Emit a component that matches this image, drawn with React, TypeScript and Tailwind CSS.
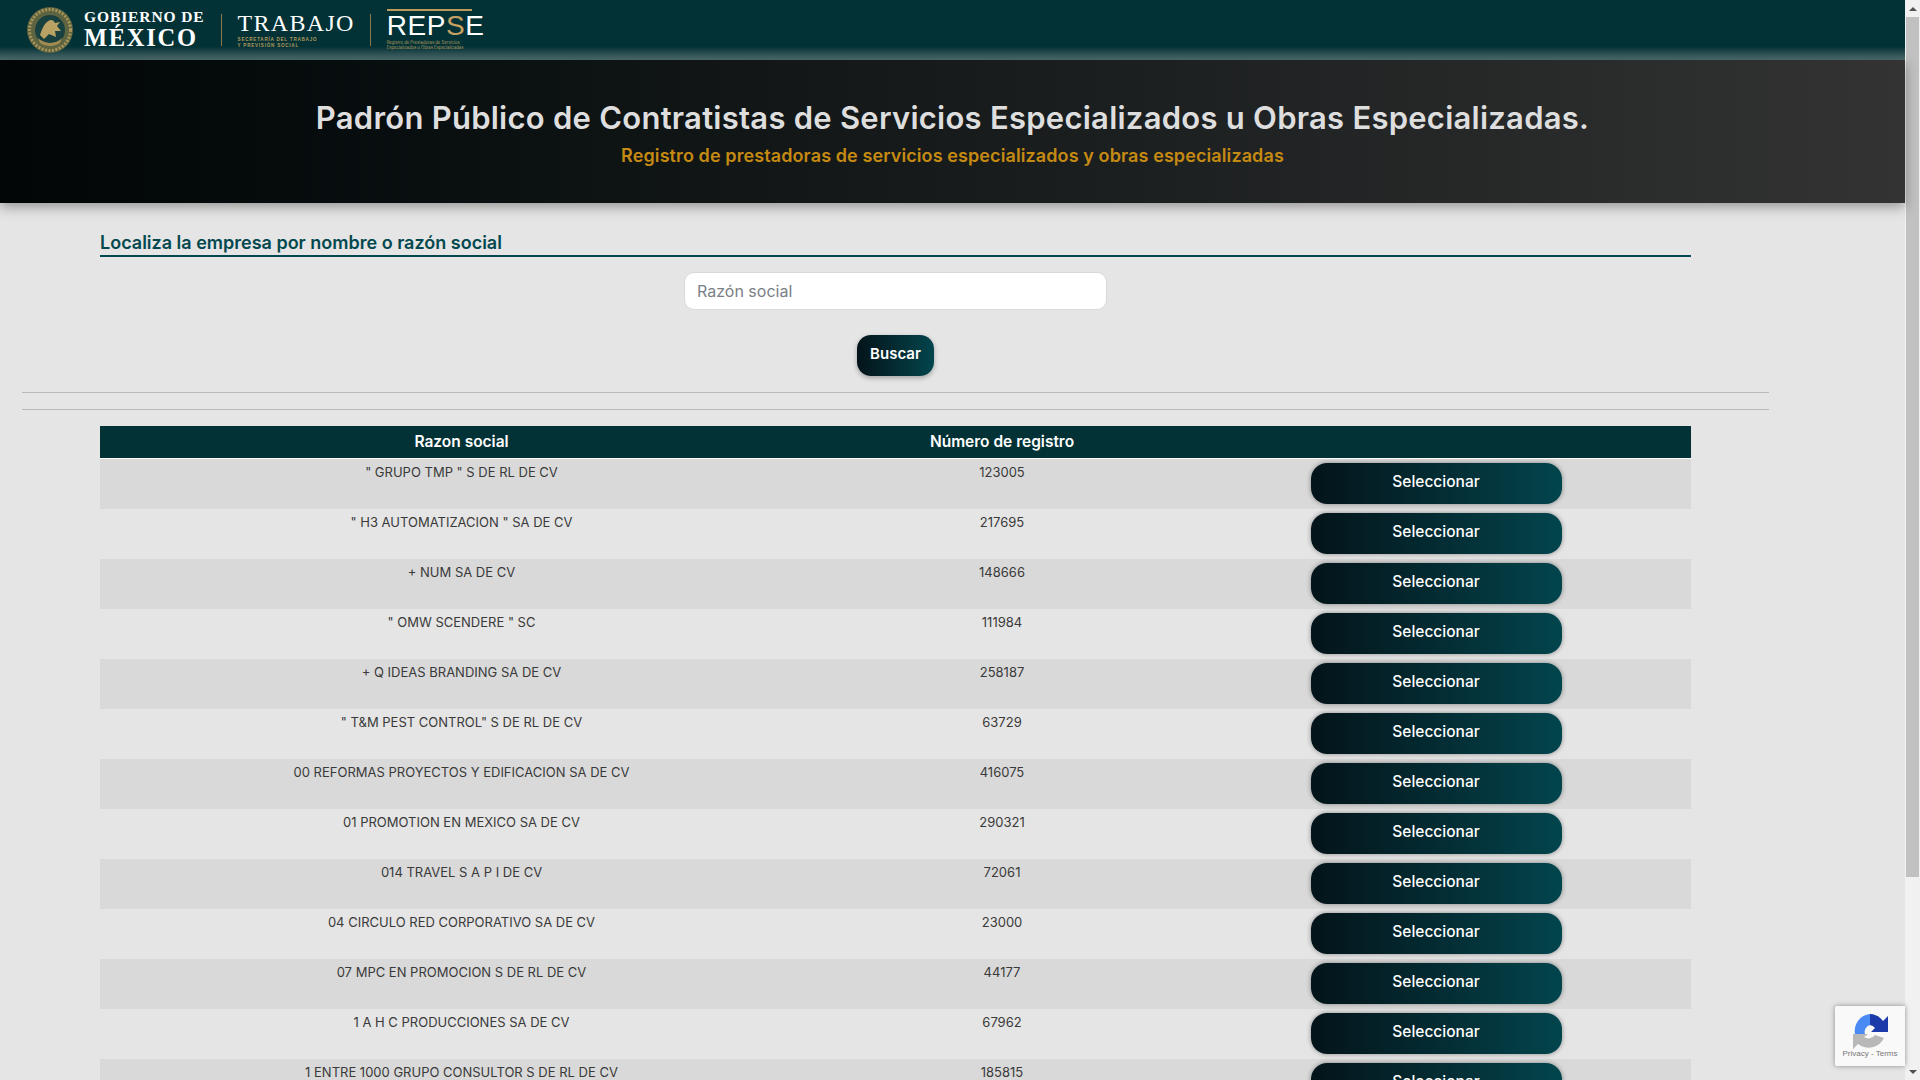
import React from 'react';

const rows = [
  ['" GRUPO TMP " S DE RL DE CV', '123005'],
  ['" H3 AUTOMATIZACION " SA DE CV', '217695'],
  ['+ NUM SA DE CV', '148666'],
  ['" OMW SCENDERE " SC', '111984'],
  ['+ Q IDEAS BRANDING SA DE CV', '258187'],
  ['" T&M PEST CONTROL" S DE RL DE CV', '63729'],
  ['00 REFORMAS PROYECTOS Y EDIFICACION SA DE CV', '416075'],
  ['01 PROMOTION EN MEXICO SA DE CV', '290321'],
  ['014 TRAVEL S A P I DE CV', '72061'],
  ['04 CIRCULO RED CORPORATIVO SA DE CV', '23000'],
  ['07 MPC EN PROMOCION S DE RL DE CV', '44177'],
  ['1 A H C PRODUCCIONES SA DE CV', '67962'],
  ['1 ENTRE 1000 GRUPO CONSULTOR S DE RL DE CV', '185815'],
];

const Emblem = () => (
  <svg width="50" height="50" viewBox="0 0 50 50" className="shrink-0">
    <circle cx="25" cy="25" r="23" fill="#5f6440" />
    <circle cx="25" cy="25" r="20.5" fill="none" stroke="#a8955a" strokeWidth="3" strokeDasharray="2 1.5" />
    <circle cx="25" cy="25" r="15" fill="#17403f" />
    <path d="M15 30c3-9 6-14 11-15 2 0 3 1 4 3l5-1-3 4 4 5-6 0 1 6-7-3-5 5z" fill="#b8a264" />
    <path d="M13 33c6 6 17 7 24 0l-2 5c-6 4-14 4-20 0z" fill="#a08c52" />
  </svg>
);

const App = () => {
  return (
    <div className="h-screen overflow-hidden flex bg-[#e5e5e5] font-['Inter',sans-serif]">
      <div className="flex-1 min-w-0 relative">
        {/* Top bar with logos */}
        <header className="h-[60px] bg-gradient-to-b from-[#023236] from-[78%] to-[#4f6f70] flex items-center pl-[25px] pb-[1px]">
          <Emblem />
          <div className="ml-[9px] font-['Liberation_Serif',serif] font-bold text-white leading-none">
            <div className="text-[15.5px] tracking-[0.9px]">GOBIERNO DE</div>
            <div className="text-[24.5px] tracking-[1.7px] mt-[1px]">MÉXICO</div>
          </div>
          <div className="w-px h-[32px] bg-[#8a7a4c] ml-[16px]" />
          <div className="ml-[16px] font-['Liberation_Serif',serif] text-white leading-none">
            <div className="text-[24px] tracking-[1.3px]">TRABAJO</div>
            <div className="font-['Liberation_Sans',sans-serif] font-bold text-[4.6px] tracking-[0.75px] leading-[6px] text-[#b29a5e] mt-[2px]">
              SECRETARÍA DEL TRABAJO
              <br />
              Y PREVISIÓN SOCIAL
            </div>
          </div>
          <div className="w-px h-[32px] bg-[#8a7a4c] ml-[15px]" />
          <div className="ml-[16px] w-[85px] leading-none">
            <div className="h-[2px] bg-[#bb9a5b]" />
            <div className="font-['Liberation_Sans',sans-serif] text-[28px] text-white h-[25px] mt-[2px] leading-[25px] tracking-[0.6px]">
              REP<span className="text-[#c6a162]">S</span>E
            </div>
            <div className="text-[4.2px] leading-[5.5px] text-[#b29a5e] mt-[2px] whitespace-nowrap">
              Registro de Prestadoras de Servicios
              <br />
              Especializados u Obras Especializadas
            </div>
          </div>
        </header>

        {/* Title band */}
        <section className="h-[143px] bg-gradient-to-r from-[#020607] to-[#333333] shadow-[0_4px_12px_rgba(0,0,0,0.35)] text-center pt-[15px] relative">
          <h1 className="text-[31px] leading-[44px] mt-[21px] font-semibold text-[#dedede] tracking-[0.25px]">
            Padrón Público de Contratistas de Servicios Especializados u Obras Especializadas.
          </h1>
          <h2 className="text-[18px] leading-[26px] mt-[3px] font-semibold text-[#c58a12] tracking-[0.1px]">
            Registro de prestadoras de servicios especializados y obras especializadas
          </h2>
        </section>

        <main className="pl-[22px] w-[1769px]">
          <div className="mx-[78px] pt-[27px]">
            <h3 className="text-[18px] leading-[25px] font-semibold text-[#03484e] border-b-2 border-[#03484e] h-[27px]">
              Localiza la empresa por nombre o razón social
            </h3>
            <div className="flex flex-col items-center">
              <input
                placeholder="Razón social"
                className="mt-[15px] w-[423px] h-[38px] bg-white border border-[#d5d9dc] rounded-[10px] px-3 text-[16px] text-[#6c757d] placeholder:text-[#7a8086] outline-none"
              />
              <button className="mt-[25px] w-[77px] h-[41px] rounded-[14px] bg-gradient-to-r from-[#03141a] to-[#02454d] text-white text-[15px] font-semibold pb-[3px] shadow-[0_2px_5px_rgba(0,0,0,0.3)]">
                Buscar
              </button>
            </div>
          </div>
          <hr className="mt-[16px] border-t border-[#b9b9b9]" />
          <hr className="mt-[16px] border-t border-[#b9b9b9]" />
          <div className="mx-[78px] mt-[16px]">
            <div className="grid grid-cols-[723px_358px_1fr] h-[33px] bg-[#023236] border-b border-white text-white text-[15.5px] font-semibold text-center leading-[32px]">
              <div>Razon social</div>
              <div>Número de registro</div>
              <div />
            </div>
            {rows.map(([name, num], i) => (
              <div
                key={num}
                className={`grid grid-cols-[723px_358px_1fr] h-[50px] text-center text-[13px] leading-[16px] text-[#3a3a3a] ${i % 2 === 0 ? 'bg-[#d9d9d9]' : 'bg-[#e5e5e5]'}`}
              >
                <div className="pt-[5px]">{name}</div>
                <div className="pt-[5px]">{num}</div>
                <div className="flex justify-center pt-[4px]">
                  <button className="w-[251px] h-[41px] shrink-0 rounded-[16px] bg-gradient-to-r from-[#03141a] to-[#02454d] text-white text-[15.5px] font-medium pb-[3px] shadow-[0_0_5px_rgba(0,0,0,0.4)]">
                    Seleccionar
                  </button>
                </div>
              </div>
            ))}
          </div>
        </main>

        {/* reCAPTCHA badge */}
        <div className="absolute right-0 top-[1006px] w-[70px] h-[60px] bg-[#f9f9f9] rounded-l-[2px] shadow-[0_0_5px_rgba(128,128,128,0.9)] flex flex-col items-center pt-[6px]">
          <svg width="38" height="38" viewBox="0 0 38 38">
            <path d="M19 2a17 17 0 0 0-15 20h10a7 7 0 0 1 5-9z" fill="#4a8af4" />
            <path d="M19 2V13a7 7 0 0 1 5 3l-4 4h17V4l-5 5A17 17 0 0 0 19 2z" fill="#1c3aa9" />
            <path d="M2 22v15l5-5a17 17 0 0 0 26-6l-9-3a8 8 0 0 1-11 2l4-3z" fill="#b8b8b8" />
          </svg>
          <div className="font-['Liberation_Sans',sans-serif] text-[8px] leading-[10px] text-[#777] whitespace-nowrap mt-[-1px]">
            Privacy - Terms
          </div>
        </div>
      </div>

      {/* Page scrollbar */}
      <div className="w-[15px] shrink-0 bg-[#f1f1f1] flex flex-col items-center">
        <div className="h-[17px] flex items-center justify-center">
          <div className="w-0 h-0 border-x-[4px] border-x-transparent border-b-[4px] border-b-[#505050]" />
        </div>
        <div className="w-[13px] h-[860px] bg-[#c1c1c1]" />
        <div className="flex-1" />
        <div className="h-[17px] flex items-center justify-center">
          <div className="w-0 h-0 border-x-[4px] border-x-transparent border-t-[4px] border-t-[#505050]" />
        </div>
      </div>
    </div>
  );
};

export default App;
